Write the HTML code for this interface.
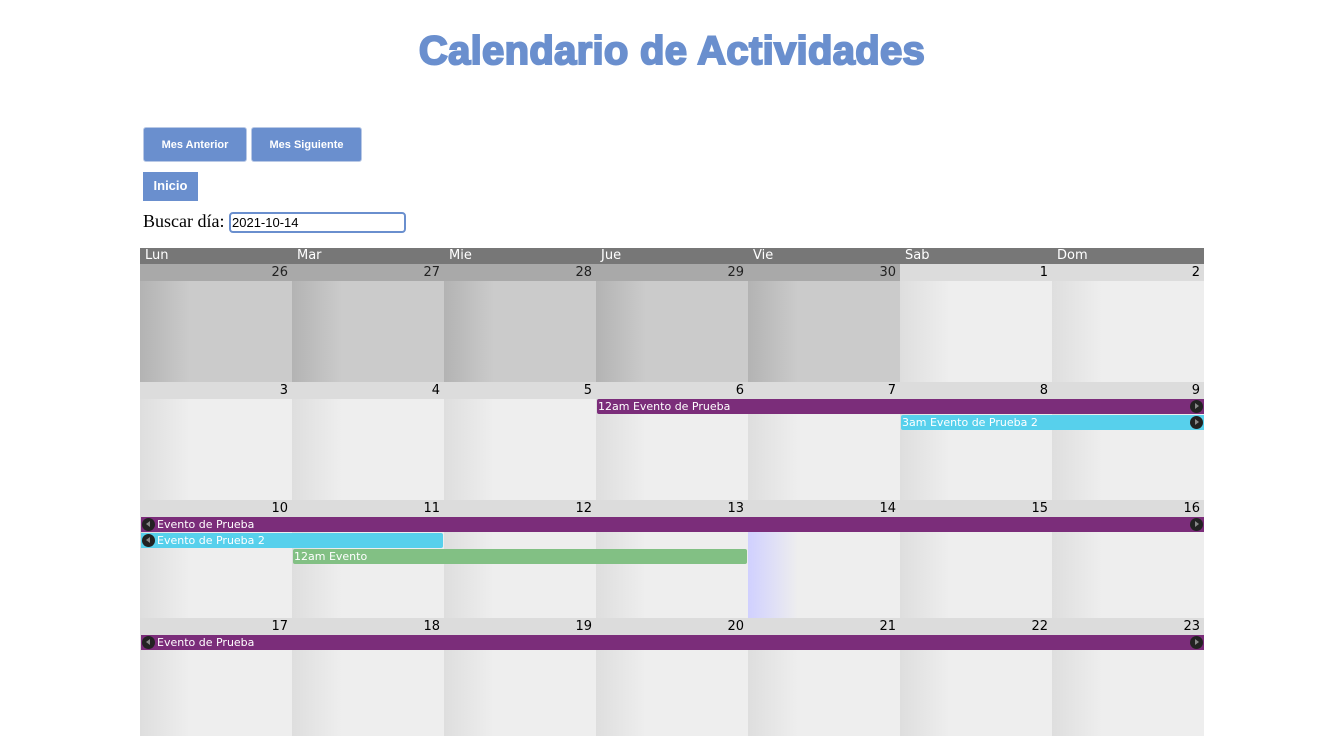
<!DOCTYPE html>
<html><head><meta charset="utf-8"><style>
body{margin:0;width:1344px;height:665px;overflow:hidden;background:#fff;position:relative;font-family:"Liberation Sans",sans-serif}
h1{position:absolute;top:27px;left:0;width:1344px;margin:0;text-align:center;font-size:40px;font-weight:bold;color:#6a8fce;-webkit-text-stroke:2px #6a8fce;letter-spacing:0.3px;line-height:48px}
.btn{position:absolute;background:#6a8fce;color:#fff;font-size:12px;font-weight:bold;border:1px solid #b9c9e6;border-radius:3px;text-align:center;box-sizing:border-box}
.lbl{position:absolute;left:143px;top:211px;font-family:"Liberation Serif",serif;font-size:18px}
.inp{position:absolute;left:229px;top:212px;width:177px;height:21px;box-sizing:border-box;border:2px solid #6a8fce;border-radius:4px;font-size:13px;padding:1px 1px;line-height:15px}
.hdr{position:absolute;left:140px;top:248px;width:1064px;height:16px;background:#777;color:#fff;font-size:13px;font-family:"DejaVu Sans",sans-serif}
.hdr span{position:absolute;top:0;line-height:16px}
.wk{position:absolute;left:140px;width:1064px;height:118px;display:flex}
.c{width:152px;height:118px}
.c .n{height:17px;background:#dcdcdc;text-align:right;font-size:13px;font-family:"DejaVu Sans",sans-serif;line-height:18px;padding-right:4px;color:#000}
.c .b{height:101px;background:linear-gradient(90deg,#dedede,#eeeeee 50px)}
.c.p .n{background:#a9a9a9;color:#222}
.c.p .b{background:linear-gradient(90deg,#b3b3b3,#cbcbcb 50px)}
.c.t .b{background:linear-gradient(90deg,#d0d0ff,#eeeeee 50px)}
.ev{position:absolute;height:15px;color:#fff;font-size:11px;font-family:"DejaVu Sans",sans-serif;line-height:15px;box-sizing:border-box;padding-left:1px;white-space:nowrap}
.pu{background:#7b2d7a}.cy{background:#57d0ec}.gr{background:#82c084;border-radius:2px}
.ar{position:absolute;top:1px;width:13px;height:13px;border-radius:50%;background:#222}
.ar::after{content:"";position:absolute;top:3px;border-top:3.5px solid transparent;border-bottom:3.5px solid transparent}
.ar.r{right:1px}.ar.r::after{left:5px;border-left:4px solid #888}
.ar.l{left:1px}.ar.l::after{left:4px;border-right:4px solid #888}
</style></head><body>
<h1>Calendario de Actividades</h1>
<div class="btn" style="left:143px;top:127px;width:104px;height:35px;line-height:34px;font-size:11px">Mes Anterior</div>
<div class="btn" style="left:251px;top:127px;width:111px;height:35px;line-height:34px;font-size:11px">Mes Siguiente</div>
<div class="btn" style="left:143px;top:172px;width:55px;height:29px;line-height:28px;border:none;border-radius:0;font-size:13px">Inicio</div>
<div class="lbl">Buscar día:</div>
<div class="inp">2021-10-14</div>
<div class="hdr"><span style="left:5px">Lun</span><span style="left:157px">Mar</span><span style="left:309px">Mie</span><span style="left:461px">Jue</span><span style="left:613px">Vie</span><span style="left:765px">Sab</span><span style="left:917px">Dom</span></div>

<div class="wk" style="top:264px">
<div class="c p"><div class="n">26</div><div class="b"></div></div>
<div class="c p"><div class="n">27</div><div class="b"></div></div>
<div class="c p"><div class="n">28</div><div class="b"></div></div>
<div class="c p"><div class="n">29</div><div class="b"></div></div>
<div class="c p"><div class="n">30</div><div class="b"></div></div>
<div class="c"><div class="n">1</div><div class="b"></div></div>
<div class="c"><div class="n">2</div><div class="b"></div></div>
</div>
<div class="wk" style="top:382px">
<div class="c"><div class="n">3</div><div class="b"></div></div>
<div class="c"><div class="n">4</div><div class="b"></div></div>
<div class="c"><div class="n">5</div><div class="b"></div></div>
<div class="c"><div class="n">6</div><div class="b"></div></div>
<div class="c"><div class="n">7</div><div class="b"></div></div>
<div class="c"><div class="n">8</div><div class="b"></div></div>
<div class="c"><div class="n">9</div><div class="b"></div></div>
</div>
<div class="wk" style="top:500px">
<div class="c"><div class="n">10</div><div class="b"></div></div>
<div class="c"><div class="n">11</div><div class="b"></div></div>
<div class="c"><div class="n">12</div><div class="b"></div></div>
<div class="c"><div class="n">13</div><div class="b"></div></div>
<div class="c t"><div class="n">14</div><div class="b"></div></div>
<div class="c"><div class="n">15</div><div class="b"></div></div>
<div class="c"><div class="n">16</div><div class="b"></div></div>
</div>
<div class="wk" style="top:618px">
<div class="c"><div class="n">17</div><div class="b"></div></div>
<div class="c"><div class="n">18</div><div class="b"></div></div>
<div class="c"><div class="n">19</div><div class="b"></div></div>
<div class="c"><div class="n">20</div><div class="b"></div></div>
<div class="c"><div class="n">21</div><div class="b"></div></div>
<div class="c"><div class="n">22</div><div class="b"></div></div>
<div class="c"><div class="n">23</div><div class="b"></div></div>
</div>

<div class="ev pu" style="left:597px;top:399px;width:607px;border-radius:2px 0 0 2px">12am Evento de Prueba<div class="ar r"></div></div>
<div class="ev cy" style="left:901px;top:415px;width:303px;border-radius:2px 0 0 2px">3am Evento de Prueba 2<div class="ar r"></div></div>
<div class="ev pu" style="left:141px;top:517px;width:1063px;padding-left:16px"><div class="ar l"></div>Evento de Prueba<div class="ar r"></div></div>
<div class="ev cy" style="left:141px;top:533px;width:302px;padding-left:16px;border-radius:0 2px 2px 0"><div class="ar l"></div>Evento de Prueba 2</div>
<div class="ev gr" style="left:293px;top:549px;width:454px">12am Evento</div>
<div class="ev pu" style="left:141px;top:635px;width:1063px;padding-left:16px"><div class="ar l"></div>Evento de Prueba<div class="ar r"></div></div>
</body></html>
